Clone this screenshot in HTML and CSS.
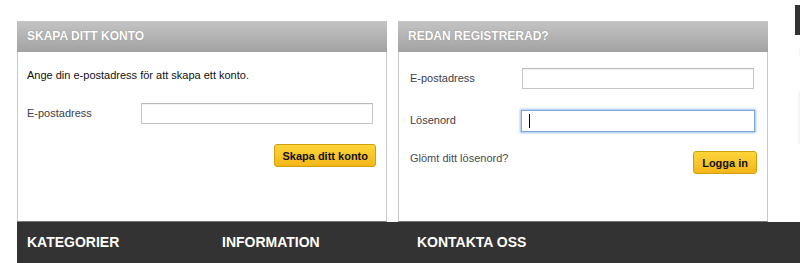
FILE: index.html
```html
<!DOCTYPE html>
<html lang="sv">
    <head>
        <meta charset="UTF-8">
        <meta name="viewport" content="width=device-width, initial-scale=1.0">
        <title>Mitt konto</title>
        <link rel="stylesheet" href="styles.css">
    </head>
<body>
    <div class="top-row">
        <div class="panel">
            <h2 class="panel-title">SKAPA DITT KONTO</h2>
            <div class="panel-body">
                <p class="intro">Ange din e-postadress för att skapa ett konto.</p>
                <div class="form-row">
                    <label for="newEmail">E-postadress</label>
                    <input type="text" id="newEmail" class="field">
                </div>
                <div class="actions">
                    <button type="button" class="yellow-btn">Skapa ditt konto</button>
                </div>
            </div>
        </div>
        <div class="panel">
            <h2 class="panel-title">REDAN REGISTRERAD?</h2>
            <div class="panel-body login">
                <div class="form-row">
                    <label for="loginEmail">E-postadress</label>
                    <input type="text" id="loginEmail" class="field">
                </div>
                <div class="form-row">
                    <label for="loginPass">Lösenord</label>
                    <span class="caret-wrap">
                        <input type="password" id="loginPass" class="field focused">
                    </span>
                </div>
                <div class="actions split">
                    <a href="#" class="forgot">Glömt ditt lösenord?</a>
                    <button type="button" class="yellow-btn">Logga in</button>
                </div>
            </div>
        </div>
        <div class="side">
            <div class="side-bar"></div>
            <div class="side-line"></div>
            <div class="side-img"></div>
        </div>
    </div>
    <div class="footer">
        <div class="footer-col">KATEGORIER</div>
        <div class="footer-col">INFORMATION</div>
        <div class="footer-col">KONTAKTA OSS</div>
    </div>
</body>
</html>
```

FILE: styles.css
```css
body {
    font-family: "Liberation Sans", Arial, Helvetica, sans-serif;
    margin: 0;
    background-color: #fff;
    overflow: hidden;
}
.top-row {
    display: flex;
    padding: 5px 0 0 17px;
    height: 217px;
}
.panel {
    flex-shrink: 0;
    width: 368px;
    margin-top: 16px;
    margin-right: 11px;
    border: 1px solid #c9c9c9;
    border-bottom: 1px solid #777;
    border-top: none;
    display: flex;
    flex-direction: column;
}
.panel-title {
    margin: 0 -1px;
    height: 31px;
    padding-left: 10px;
    font-size: 12px;
    line-height: 31px;
    font-weight: bold;
    color: #fff;
    text-shadow: 0 0 1px rgba(0, 0, 0, 0.3);
    background: linear-gradient(#c4c4c4, #a2a2a2);
}
.panel-body {
    flex-grow: 1;
    padding: 14px 10px 0 9px;
    font-size: 11px;
}
.intro {
    margin: 3px 0 21px 0;
    color: #111;
}
.form-row {
    display: flex;
    align-items: center;
    height: 22px;
}
.form-row label {
    width: 114px;
    color: #404048;
}
.field {
    width: 230px;
    height: 19px;
    padding: 0;
    margin: 0;
    border: 1px solid #c4c4c4;
    border-top-color: #bbb;
    box-shadow: inset 0 1px 1px rgba(0, 0, 0, 0.06);
    outline: none;
}
.actions {
    display: flex;
    justify-content: flex-end;
    margin-top: 20px;
}
.yellow-btn {
    font-family: "Liberation Sans", Arial, Helvetica, sans-serif;
    font-size: 11px;
    font-weight: bold;
    color: #111;
    height: 23px;
    padding: 0 7px;
    border: 1px solid #d09f0c;
    border-radius: 3px;
    background: linear-gradient(#fdd53a, #f4b61a);
    cursor: pointer;
}
.login {
    padding-top: 15px;
    padding-left: 11px;
}
.login .form-row label {
    width: 112px;
}
.login .form-row + .form-row {
    margin-top: 20px;
}
.caret-wrap {
    position: relative;
    display: inline-block;
    height: 21px;
    margin-left: -1px;
}
.caret-wrap::after {
    content: "";
    position: absolute;
    left: 8px;
    top: 4px;
    width: 1px;
    height: 14px;
    background-color: #000;
}
.field.focused {
    width: 232px;
    height: 20px;
    border: 1px solid #7fa8d6;
    box-shadow: 0 0 2px 1px #9cc1ec;
}
.split {
    justify-content: space-between;
    align-items: flex-start;
    margin-top: 20px;
}
.forgot {
    color: #4a4a55;
    text-decoration: none;
    padding-top: 1px;
}
.split .yellow-btn {
    padding: 0 8px;
}
.side {
    flex-shrink: 0;
    margin-left: 16px;
    width: 10px;
}
.side-bar {
    height: 30px;
    background-color: #333;
}
.side-line {
    margin: 13px 0 0 4px;
    width: 4px;
    height: 9px;
    background-color: #fdf4e0;
}
.side-img {
    margin: 33px 0 0 2px;
    width: 8px;
    height: 56px;
    border-radius: 6px 0 0 6px;
    background: linear-gradient(90deg, #fff, #efecea, #faf9f8);
}
.footer {
    display: flex;
    margin-left: 17px;
    height: 41px;
    padding-left: 10px;
    background-color: #333;
}
.footer-col {
    width: 195px;
    color: #fff;
    font-size: 14px;
    line-height: 41px;
    font-weight: bold;
}
```
